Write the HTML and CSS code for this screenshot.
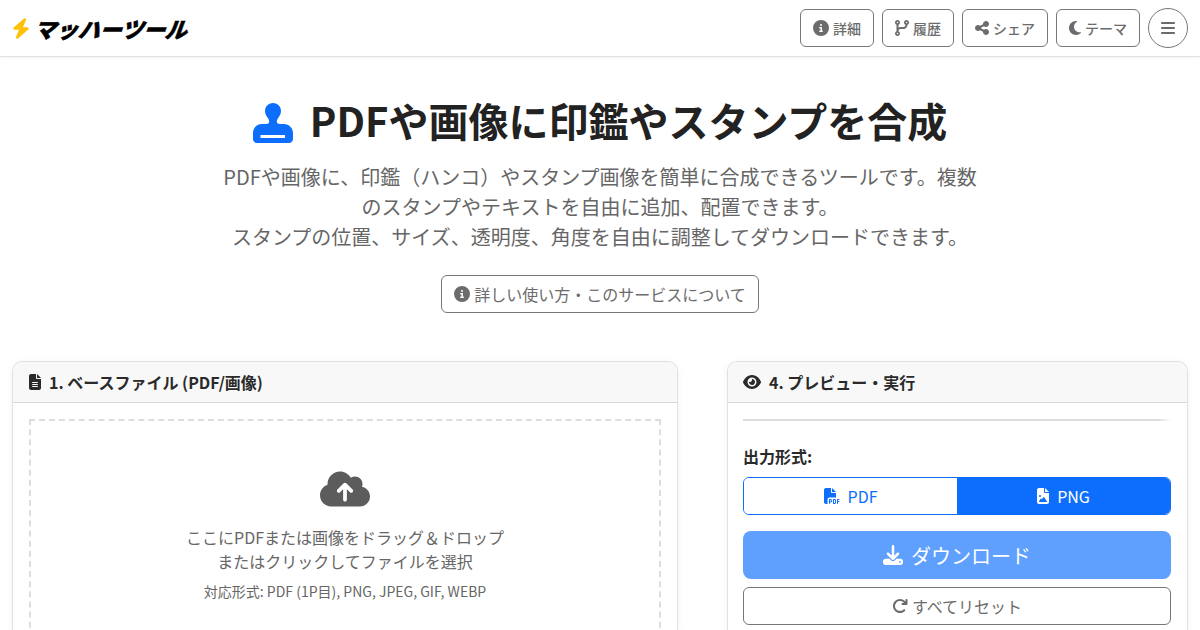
FILE: index.html
```html
<!DOCTYPE html>
<html lang="ja">
<head>
<meta charset="utf-8">
<title>PDFや画像に印鑑やスタンプを合成</title>
<link rel="stylesheet" href="styles.css">
</head>
<body>
<header class="topbar">
  <a class="brand">
    <svg class="brand-bolt" viewBox="0 0 448 512"><path d="M349.4 44.6c5.9-13.7 1.5-29.7-10.6-38.5s-28.6-8-39.9 1.8l-256 224c-10 8.8-13.6 22.9-8.9 35.3S50.7 288 64 288H175.5L98.6 467.4c-5.9 13.7-1.5 29.7 10.6 38.5s28.6 8 39.9-1.8l256-224c10-8.8 13.6-22.9 8.9-35.3s-16.6-20.7-30-20.7H272.5L349.4 44.6z"/></svg>
    <span class="brand-name">マッハーツール</span>
  </a>
  <nav class="actions">
    <button class="nav-btn"><svg class="ico" width="16" viewBox="0 0 512 512"><path d="M256 512A256 256 0 1 0 256 0a256 256 0 1 0 0 512zM216 336h24V272H216c-13.3 0-24-10.7-24-24s10.7-24 24-24h48c13.3 0 24 10.7 24 24v88h8c13.3 0 24 10.7 24 24s-10.7 24-24 24H216c-13.3 0-24-10.7-24-24s10.7-24 24-24zm40-208a32 32 0 1 1 0 64 32 32 0 1 1 0-64z"/></svg>詳細</button>
    <button class="nav-btn"><svg class="ico" width="14" viewBox="0 0 448 512"><path d="M80 104a24 24 0 1 0 0-48 24 24 0 1 0 0 48zm80-24c0 32.8-19.7 61-48 73.3v87.8c18.8-10.9 40.7-17.1 64-17.1h96c35.3 0 64-28.7 64-64v-6.7C307.7 141 288 112.8 288 80c0-44.2 35.8-80 80-80s80 35.8 80 80c0 32.8-19.7 61-48 73.3V160c0 70.7-57.3 128-128 128H176c-35.3 0-64 28.7-64 64v6.7c28.3 12.3 48 40.5 48 73.3c0 44.2-35.8 80-80 80s-80-35.8-80-80c0-32.8 19.7-61 48-73.3V352 153.3C19.7 141 0 112.8 0 80C0 35.8 35.8 0 80 0s80 35.8 80 80zm232 0a24 24 0 1 0 -48 0 24 24 0 1 0 48 0zM80 456a24 24 0 1 0 0-48 24 24 0 1 0 0 48z"/></svg>履歴</button>
    <button class="nav-btn"><svg class="ico" width="14" viewBox="0 0 448 512"><path d="M352 224c53 0 96-43 96-96s-43-96-96-96s-96 43-96 96c0 4 .2 8 .7 11.9l-94.1 47C145.4 170.2 121.9 160 96 160c-53 0-96 43-96 96s43 96 96 96c25.9 0 49.4-10.2 66.6-26.9l94.1 47c-.5 3.9-.7 7.8-.7 11.9c0 53 43 96 96 96s96-43 96-96s-43-96-96-96c-25.9 0-49.4 10.2-66.6 26.9l-94.1-47c.5-3.9 .7-7.8 .7-11.9s-.2-8-.7-11.9l94.1-47C302.6 213.8 326.1 224 352 224z"/></svg>シェア</button>
    <button class="nav-btn"><svg class="ico" width="12" viewBox="0 0 384 512"><path d="M223.5 32C100 32 0 132.3 0 256S100 480 223.5 480c60.6 0 115.5-24.2 155.8-63.4c5-4.9 6.3-12.5 3.1-18.7s-10.1-9.7-17-8.5c-9.8 1.7-19.8 2.6-30.1 2.6c-96.9 0-175.5-78.8-175.5-176c0-65.8 36-123.1 89.3-153.3c6.1-3.5 9.2-10.5 7.7-17.3s-7.3-11.9-14.3-12.5c-6.3-.5-12.6-.8-19-.8z"/></svg>テーマ</button>
    <button class="menu-btn" aria-label="メニュー"><svg class="ico-menu" viewBox="0 0 448 512"><path d="M0 96C0 78.3 14.3 64 32 64H416c17.7 0 32 14.3 32 32s-14.3 32-32 32H32C14.3 128 0 113.7 0 96zM0 256c0-17.7 14.3-32 32-32H416c17.7 0 32 14.3 32 32s-14.3 32-32 32H32c-17.7 0-32-14.3-32-32zM448 416c0 17.7-14.3 32-32 32H32c-17.7 0-32-14.3-32-32s14.3-32 32-32H416c17.7 0 32 14.3 32 32z"/></svg></button>
  </nav>
</header>

<main class="page">
  <section class="hero">
    <h1 class="title">
      <svg class="title-ico" viewBox="0 0 40 40"><path fill-rule="evenodd" d="M20 0C15.2 0 12 3.7 12 8c0 3 1.4 5 2.6 6.7 1 1.3 1.6 2.7 1.6 3.8 0 1.8-1.5 2.5-3.2 2.5H9C4 21 0 25 0 30V36c0 2.2 1.8 4 4 4H36c2.2 0 4-1.8 4-4V30c0-5-4-9-9-9H27c-1.7 0-3.2-.7-3.2-2.5 0-1.1.6-2.5 1.6-3.8C26.6 13 28 11 28 8 28 3.7 24.8 0 20 0ZM7.5 32H32v3H7.5Z"/></svg>
      PDFや画像に印鑑やスタンプを合成
    </h1>
    <p class="lead">PDFや画像に、印鑑（ハンコ）やスタンプ画像を簡単に合成できるツールです。複数のスタンプやテキストを自由に追加、配置できます。<br>スタンプの位置、サイズ、透明度、角度を自由に調整してダウンロードできます。</p>
    <button class="about-btn"><svg class="ico" width="16" viewBox="0 0 512 512"><path d="M256 512A256 256 0 1 0 256 0a256 256 0 1 0 0 512zM216 336h24V272H216c-13.3 0-24-10.7-24-24s10.7-24 24-24h48c13.3 0 24 10.7 24 24v88h8c13.3 0 24 10.7 24 24s-10.7 24-24 24H216c-13.3 0-24-10.7-24-24s10.7-24 24-24zm40-208a32 32 0 1 1 0 64 32 32 0 1 1 0-64z"/></svg>詳しい使い方・このサービスについて</button>
  </section>

  <div class="columns">
    <section class="card card-left">
      <h2 class="card-head"><svg class="head-ico" viewBox="0 0 384 512"><path d="M64 0C28.7 0 0 28.7 0 64V448c0 35.3 28.7 64 64 64H320c35.3 0 64-28.7 64-64V160H256c-17.7 0-32-14.3-32-32V0H64zM256 0V128H384L256 0zM112 256H272c8.8 0 16 7.2 16 16s-7.2 16-16 16H112c-8.8 0-16-7.2-16-16s7.2-16 16-16zm0 64H272c8.8 0 16 7.2 16 16s-7.2 16-16 16H112c-8.8 0-16-7.2-16-16s7.2-16 16-16zm0 64H272c8.8 0 16 7.2 16 16s-7.2 16-16 16H112c-8.8 0-16-7.2-16-16s7.2-16 16-16z"/></svg>1. ベースファイル (PDF/画像)</h2>
      <div class="card-body">
        <div class="dropzone">
          <svg class="cloud" viewBox="0 0 640 512"><path d="M144 480C64.5 480 0 415.5 0 336c0-62.8 40.2-116.2 96.2-135.9c-.1-2.7-.2-5.4-.2-8.1c0-88.4 71.6-160 160-160c59.3 0 111 32.2 138.7 80.2C409.9 102 428.3 96 448 96c53 0 96 43 96 96c0 12.2-2.3 23.8-6.4 34.6C596 238.4 640 290.1 640 352c0 70.7-57.3 128-128 128H144zm79-217c-9.4 9.4-9.4 24.6 0 33.9s24.6 9.4 33.9 0l39-39V392c0 13.3 10.7 24 24 24s24-10.7 24-24V257.9l39 39c9.4 9.4 24.6 9.4 33.9 0s9.4-24.6 0-33.9l-80-80c-9.4-9.4-24.6-9.4-33.9 0l-80 80z"/></svg>
          <p class="drop-text">ここにPDFまたは画像をドラッグ＆ドロップ<br>またはクリックしてファイルを選択</p>
          <p class="drop-note">対応形式: PDF (1P目), PNG, JPEG, GIF, WEBP</p>
        </div>
      </div>
    </section>

    <section class="card card-right">
      <h2 class="card-head card-head-right"><svg class="head-ico-eye" viewBox="0 0 576 512"><path d="M288 32c-80.8 0-145.5 36.8-192.6 80.6C48.6 156 17.3 208 2.5 243.7c-3.3 7.9-3.3 16.7 0 24.6C17.3 304 48.6 356 95.4 399.4C142.5 443.2 207.2 480 288 480s145.5-36.8 192.6-80.6c46.8-43.5 78.1-95.4 93-131.1c3.3-7.9 3.3-16.7 0-24.6c-14.9-35.7-46.2-87.7-93-131.1C433.5 68.8 368.8 32 288 32zM144 256a144 144 0 1 1 288 0 144 144 0 1 1 -288 0zm144-64c0 35.3-28.7 64-64 64c-7.1 0-13.9-1.2-20.3-3.3c-5.5-1.8-11.9 1.6-11.7 7.4c.3 6.9 1.3 13.8 3.2 20.7c13.7 51.2 66.4 81.6 117.6 67.9s81.6-66.4 67.9-117.6c-11.1-41.5-47.8-69.4-88.6-71.1c-5.8-.2-9.2 6.1-7.4 11.7c2.1 6.4 3.3 13.2 3.3 20.3z"/></svg>4. プレビュー・実行</h2>
      <div class="card-body card-body-right">
        <hr class="rule">
        <div class="field-label">出力形式:</div>
        <div class="segment">
          <button class="seg seg-off"><svg class="seg-pdf" viewBox="0 0 512 512"><path d="M0 64C0 28.7 28.7 0 64 0H224V128c0 17.7 14.3 32 32 32H384V304H176c-35.3 0-64 28.7-64 64V512H64c-35.3 0-64-28.7-64-64V64zm384 64H256V0L384 128zM176 352h32c30.9 0 56 25.1 56 56s-25.1 56-56 56H192v32c0 8.8-7.2 16-16 16s-16-7.2-16-16V448 368c0-8.8 7.2-16 16-16zm32 80c13.3 0 24-10.7 24-24s-10.7-24-24-24H192v48h16zm96-80h32c26.5 0 48 21.5 48 48v64c0 26.5-21.5 48-48 48H304c-8.8 0-16-7.2-16-16V368c0-8.8 7.2-16 16-16zm32 128c8.8 0 16-7.2 16-16V400c0-8.8-7.2-16-16-16H320v96h16zm80-112c0-8.8 7.2-16 16-16h48c8.8 0 16 7.2 16 16s-7.2 16-16 16H448v32h32c8.8 0 16 7.2 16 16s-7.2 16-16 16H448v48c0 8.8-7.2 16-16 16s-16-7.2-16-16V432 368z"/></svg>PDF</button>
          <button class="seg seg-on"><svg class="seg-png" viewBox="0 0 384 512"><path d="M64 0C28.7 0 0 28.7 0 64V448c0 35.3 28.7 64 64 64H320c35.3 0 64-28.7 64-64V160H256c-17.7 0-32-14.3-32-32V0H64zM256 0V128H384L256 0zM64 256a32 32 0 1 1 64 0 32 32 0 1 1 -64 0zm152 32c5.3 0 10.2 2.6 13.2 6.9l88 128c3.4 4.9 3.7 11.3 1 16.5s-8.2 8.6-14.2 8.6H216 176 128 80c-5.8 0-11.1-3.1-13.9-8.1s-2.8-11.2 .2-16.1l48-80c2.9-4.8 8.1-7.8 13.7-7.8s10.8 2.9 13.7 7.8l12.8 21.4 48.3-70.2c3-4.3 7.9-6.9 13.2-6.9z"/></svg>PNG</button>
        </div>
        <button class="download-btn"><svg class="dl-ico" viewBox="0 0 512 512"><path d="M288 32c0-17.7-14.3-32-32-32s-32 14.3-32 32V274.7l-73.4-73.4c-12.5-12.5-32.8-12.5-45.3 0s-12.5 32.8 0 45.3l128 128c12.5 12.5 32.8 12.5 45.3 0l128-128c12.5-12.5 12.5-32.8 0-45.3s-32.8-12.5-45.3 0L288 274.7V32zM64 352c-35.3 0-64 28.7-64 64v32c0 35.3 28.7 64 64 64H448c35.3 0 64-28.7 64-64V416c0-35.3-28.7-64-64-64H346.5l-45.3 45.3c-25 25-65.5 25-90.5 0L165.5 352H64zm368 56a24 24 0 1 1 0 48 24 24 0 1 1 0-48z"/></svg>ダウンロード</button>
        <button class="reset-btn"><svg class="ico" width="16" viewBox="0 0 512 512"><path d="M386.3 160H336c-17.7 0-32 14.3-32 32s14.3 32 32 32H464c17.7 0 32-14.3 32-32V64c0-17.7-14.3-32-32-32s-32 14.3-32 32v51.2L414.4 97.6c-87.5-87.5-229.3-87.5-316.8 0s-87.5 229.3 0 316.8s229.3 87.5 316.8 0c12.5-12.5 12.5-32.8 0-45.3s-32.8-12.5-45.3 0c-62.5 62.5-163.8 62.5-226.3 0s-62.5-163.8 0-226.3s163.8-62.5 226.3 0L386.3 160z"/></svg>すべてリセット</button>
      </div>
    </section>
  </div>
</main>
</body>
</html>
```
FILE: styles.css
```css
* { box-sizing: border-box; }
html, body { height: 630px; overflow: hidden; }
body {
  margin: 0;
  background: #fff;
  color: #222;
  font-family: "Noto Sans CJK JP", "Noto Sans", sans-serif;
  font-size: 16px;
  line-height: 1.5;
}
button { font-family: inherit; background: transparent; cursor: pointer; padding: 0; }

.topbar {
  height: 57px;
  display: flex;
  align-items: center;
  justify-content: space-between;
  padding: 0 12px;
  background: #fff;
  border-bottom: 1px solid #e0e2e4;
  box-shadow: 0 1px 3px rgba(0,0,0,.05);
}
.brand { display: flex; align-items: center; }
.brand-bolt { width: 18px; height: 21px; fill: #ffc107; margin-right: 7px; }
.brand-name {
  font-size: 22px;
  font-weight: 900;
  color: #000;
  line-height: 1;
  letter-spacing: -.1px;
  transform: skewX(-20deg);
  display: inline-block;
  -webkit-text-stroke: .5px #000;
}
.actions { display: flex; align-items: center; gap: 8px; }
.ico { height: 16px; fill: currentColor; margin-right: 4px; flex: none; }
.nav-btn {
  height: 38px;
  padding: 0 12px;
  display: flex;
  align-items: center;
  border: 1px solid #777;
  border-radius: 6px;
  color: #6c6c6c;
  font-size: 14px;
  font-weight: 500;
}
.menu-btn {
  width: 40px;
  height: 40px;
  display: flex;
  align-items: center;
  justify-content: center;
  border: 1px solid #777;
  border-radius: 50%;
  color: #6c6c6c;
}
.ico-menu { width: 14px; height: 16px; fill: currentColor; }

.page { padding: 0 12px; }
.hero { display: flex; flex-direction: column; align-items: center; padding-top: 33px; }
.title {
  margin: 0;
  display: flex;
  align-items: center;
  gap: 17px;
  font-size: 40px;
  font-weight: 700;
  line-height: 60px;
  height: 60px;
  color: #222;
}
.title-ico { width: 40px; height: 40px; fill: #0d6efd; flex: none; margin-top: 6px; }
.lead {
  width: 760px;
  margin: 12px 0 0;
  text-align: center;
  font-size: 20px;
  line-height: 30px;
  font-weight: 400;
  color: #666;
}
.about-btn {
  margin-top: 23px;
  height: 38px;
  padding: 0 12px;
  display: flex;
  align-items: center;
  border: 1px solid #777;
  border-radius: 6px;
  color: #6c6c6c;
  font-size: 16px;
}

.columns { display: flex; justify-content: space-between; margin-top: 48px; }
.card {
  background: #fff;
  border: 1px solid #e0e0e0;
  border-bottom: 0;
  border-radius: 10px 10px 0 0;
  box-shadow: 0 2px 8px rgba(0,0,0,.05);
  height: 269px;
  overflow: hidden;
}
.card-left { width: 666px; }
.card-right { width: 461px; }
.card-head {
  margin: 0;
  height: 41px;
  padding: 0 16px;
  display: flex;
  align-items: center;
  background: #f8f8f8;
  border-bottom: 1px solid #d6d6d6;
  font-size: 16px;
  font-weight: 700;
  color: #2a2a2a;
}
.card-head-right { padding-left: 15px; }
.head-ico { width: 12px; height: 16px; fill: currentColor; margin-right: 8px; }
.head-ico-eye { width: 18px; height: 16px; fill: currentColor; margin-right: 8px; }
.card-body { padding: 16px; }
.card-body-right { padding-left: 15px; }

.dropzone {
  height: 300px;
  border: 2px dashed #ddd;
  display: flex;
  flex-direction: column;
  align-items: center;
  padding-top: 48px;
  color: #666;
  text-align: center;
}
.cloud { width: 50px; height: 40px; fill: #5c5c5c; flex: none; }
.drop-text { margin: 16px 0 0; font-size: 16px; line-height: 24px; }
.drop-note { margin: 8px 0 0; font-size: 14px; line-height: 21px; }

.rule {
  margin: 0;
  height: 2px;
  border: 0;
  background: linear-gradient(90deg, #ddd 97%, rgba(221,221,221,0) 100%);
}
.field-label { margin-top: 23px; font-weight: 700; font-size: 16px; line-height: 24px; color: #2a2a2a; }
.segment {
  margin-top: 9px;
  height: 38px;
  display: flex;
  border: 1px solid #0d6efd;
  border-radius: 6px;
  overflow: hidden;
}
.seg {
  flex: 1;
  display: flex;
  align-items: center;
  justify-content: center;
  border: 0;
  font-size: 16px;
}
.seg-off { color: #0d6efd; background: #fff; }
.seg-on { color: #fff; background: #0d6efd; }
.seg-pdf { width: 16px; height: 16px; fill: currentColor; margin-right: 8px; }
.seg-png { width: 12px; height: 16px; fill: currentColor; margin-right: 8px; }
.download-btn {
  margin-top: 16px;
  width: 100%;
  height: 48px;
  display: flex;
  align-items: center;
  justify-content: center;
  border: 0;
  border-radius: 8px;
  background: #5f9ffe;
  color: #fff;
  font-size: 20px;
}
.dl-ico { width: 20px; height: 20px; fill: currentColor; margin-right: 8px; }
.reset-btn {
  margin-top: 8px;
  width: 100%;
  height: 38px;
  display: flex;
  align-items: center;
  justify-content: center;
  border: 1px solid #777;
  border-radius: 6px;
  color: #6c6c6c;
  font-size: 16px;
}
```
